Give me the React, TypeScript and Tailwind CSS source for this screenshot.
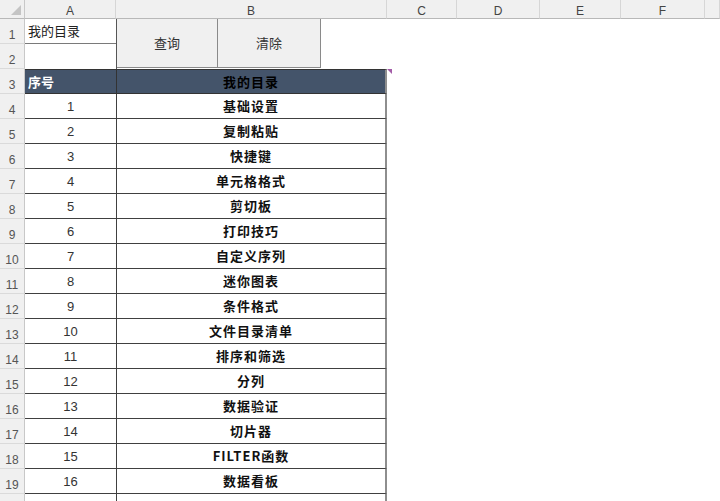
import React from "react"

const items = [
  "基础设置",
  "复制粘贴",
  "快捷键",
  "单元格格式",
  "剪切板",
  "打印技巧",
  "自定义序列",
  "迷你图表",
  "条件格式",
  "文件目录清单",
  "排序和筛选",
  "分列",
  "数据验证",
  "切片器",
  "FILTER函数",
  "数据看板",
]

const font = "font-['Liberation_Sans','Noto_Sans_CJK_SC',sans-serif]"
const cjk = "font-['Noto_Sans_CJK_SC','Liberation_Sans',sans-serif]"

function ColHeader({ label }: { label: string }) {
  return (
    <div className="flex items-end justify-center border-r border-b border-r-[#d6d6d6] border-b-[#b8b8b8] bg-[#f0f0f0] pb-[1px] text-[12px] leading-none text-[#444]">
      {label}
    </div>
  )
}

function RowHeader({ n }: { n?: number }) {
  return (
    <div className="flex items-end justify-center border-r border-b border-r-[#c8c8c8] border-b-[#dadada] bg-[#f0f0f0] pb-[2px] text-[12px] leading-none text-[#555]">
      {n}
    </div>
  )
}

export default function App() {
  return (
    <div className={`h-[501px] w-[720px] overflow-hidden bg-white ${font}`}>
      <div className="grid grid-cols-[25px_91px_271px_70px_83px_81px_84px_1fr] grid-rows-[19px_repeat(20,25px)]">
        {/* corner */}
        <div className="relative border-r border-b border-r-[#c8c8c8] border-b-[#b8b8b8] bg-[#f0f0f0]">
          <svg className="absolute right-[3px] bottom-[3px]" width="10" height="10" viewBox="0 0 10 10">
            <polygon points="10,0 10,10 0,10" fill="#c4c4c4" />
          </svg>
        </div>
        {["A", "B", "C", "D", "E", "F", ""].map((c, i) => (
          <ColHeader key={i} label={c} />
        ))}

        {/* row 1 */}
        <RowHeader n={1} />
        <div className={`flex items-center border-b border-[#7a7a7a] pl-[3px] text-[13px] text-[#222] ${cjk}`}>
          我的目录
        </div>
        <div className="row-span-2 flex border-l border-[#555]">
          <button className={`h-[49px] w-[101px] border-r border-b border-[#8a8a8a] bg-[#f0f0f0] text-[13px] text-[#333] ${cjk}`}>
            查询
          </button>
          <button className={`h-[49px] w-[103px] border-r border-b border-[#8a8a8a] bg-[#f0f0f0] text-[13px] text-[#333] ${cjk}`}>
            清除
          </button>
        </div>
        {/* empty sheet area to the right */}
        <div className="relative col-span-5 row-span-20 bg-white">
          <div className="absolute top-[50px] left-0 h-0 w-0 border-t-[5px] border-l-[5px] border-t-[#a35ca8] border-l-transparent" />
        </div>

        {/* row 2 */}
        <RowHeader n={2} />
        <div className="border-b border-transparent" />

        {/* row 3 header */}
        <RowHeader n={3} />
        <div className={`flex items-center border-t border-b border-[#333] bg-[#44546a] pl-[3px] text-[13px] font-bold text-white ${cjk}`}>
          序号
        </div>
        <div className={`relative flex items-center justify-center border-t border-b border-l border-r-2 border-[#333] border-r-[#8e8e8e] bg-[#44546a] text-[13px] font-bold tracking-[1px] text-black ${cjk}`}>
          我的目录
        </div>

        {items.map((name, i) => (
          <React.Fragment key={name}>
            <RowHeader n={i + 4} />
            <div className="flex items-center justify-center border-b border-[#404040] pt-[2px] text-[13px] text-[#333]">
              {i + 1}
            </div>
            <div className={`flex items-center justify-center border-b border-l border-r-2 border-[#404040] border-r-[#8e8e8e] text-[13px] font-bold tracking-[1px] text-[#111] ${cjk}`}>
              {name}
            </div>
          </React.Fragment>
        ))}

        {/* row 20, only its top edge shows */}
        <RowHeader />
        <div className="bg-white" />
        <div className="border-l border-r-2 border-[#404040] border-r-[#8e8e8e]" />
      </div>
    </div>
  )
}
